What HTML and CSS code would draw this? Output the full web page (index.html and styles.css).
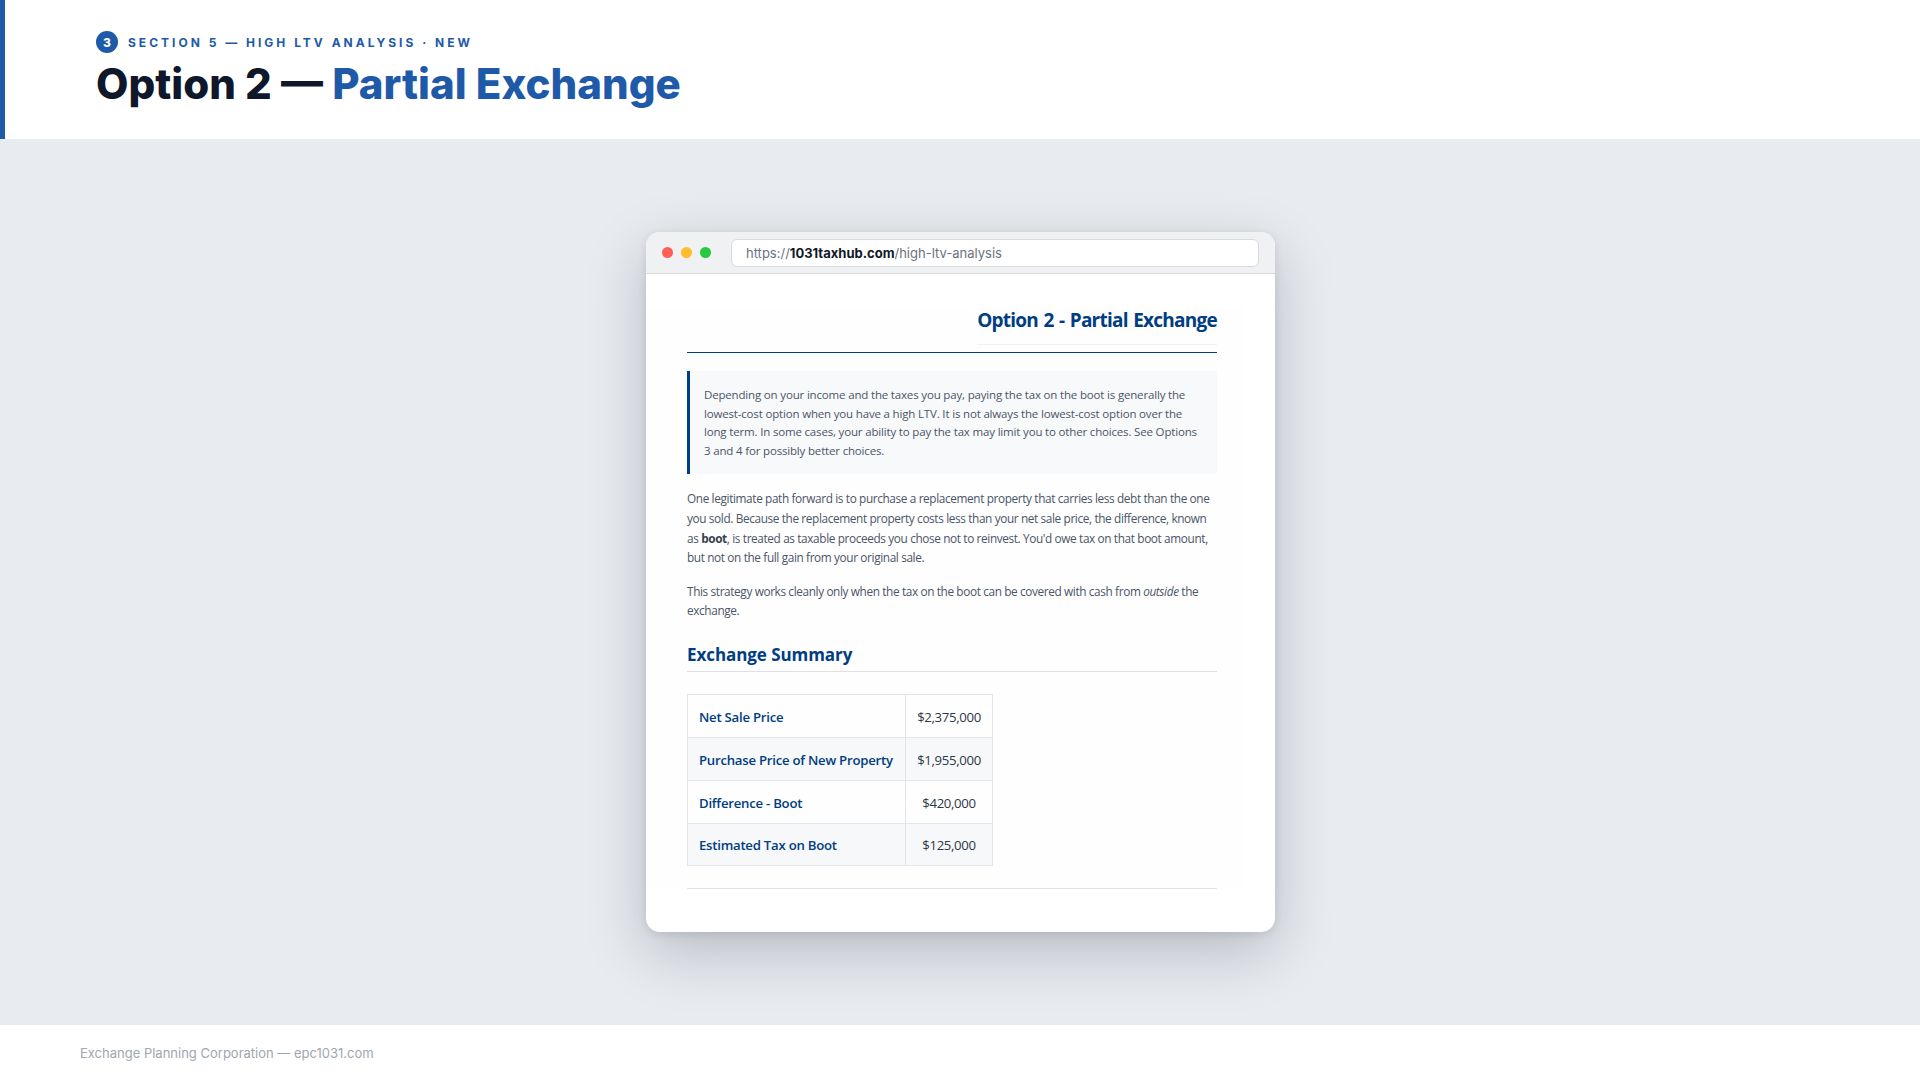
FILE: index.html
```html
<!DOCTYPE html>
<html lang="en">
<head>
<meta charset="utf-8">
<title>Option 2 — Partial Exchange</title>
<link rel="stylesheet" href="styles.css">
</head>
<body>
<div class="slide">
  <header class="top">
    <div class="eyebrow"><span class="badge">3</span><span class="eyebrow-text">SECTION 5 — HIGH LTV ANALYSIS · NEW</span></div>
    <h1 class="title">Option 2 — <span class="accent">Partial Exchange</span></h1>
  </header>
  <main class="stage">
    <div class="window">
      <div class="chrome">
        <div class="dots"><span class="dot red"></span><span class="dot amber"></span><span class="dot green"></span></div>
        <div class="url">https://<b>1031taxhub.com</b>/high-ltv-analysis</div>
      </div>
      <div class="viewport">
        <article class="article">
          <div class="page-head"><h2 class="page-title">Option 2 - Partial Exchange</h2></div>
          <div class="callout">Depending on your income and the taxes you pay, paying the tax on the boot is generally the lowest-cost option when you have a high LTV. It is not always the lowest-cost option over the long term. In some cases, your ability to pay the tax may limit you to other choices. See Options 3 and 4 for possibly better choices.</div>
          <p class="para">One legitimate path forward is to purchase a replacement property that carries less debt than the one you sold. Because the replacement property costs less than your net sale price, the difference, known as <strong>boot</strong>, is treated as taxable proceeds you chose not to reinvest. You'd owe tax on that boot amount, but not on the full gain from your original sale.</p>
          <p class="para para-next">This strategy works cleanly only when the tax on the boot can be covered with cash from <em>outside</em> the exchange.</p>
          <h3 class="section">Exchange Summary</h3>
          <table class="summary">
            <tr><th>Net Sale Price</th><td>$2,375,000</td></tr>
            <tr><th>Purchase Price of New Property</th><td>$1,955,000</td></tr>
            <tr><th>Difference - Boot</th><td>$420,000</td></tr>
            <tr class="last"><th>Estimated Tax on Boot</th><td>$125,000</td></tr>
          </table>
          <hr class="rule">
        </article>
      </div>
    </div>
  </main>
  <footer class="foot">Exchange Planning Corporation — epc1031.com</footer>
</div>
</body>
</html>
```

FILE: styles.css
```css
* { box-sizing: border-box; }
html, body { margin: 0; padding: 0; }
body { font-family: "Inter", "Liberation Sans", sans-serif; background: #e8ebef; }
.slide { width: 1920px; height: 1080px; display: flex; flex-direction: column; overflow: hidden; }

.top { height: 139px; flex: none; background: #fff; border-left: 5px solid #1e5aa8; padding: 31px 0 0 91px; }
.eyebrow { display: flex; align-items: center; gap: 10px; height: 22px; }
.badge { width: 22px; height: 22px; border-radius: 50%; background: #1e5aa8; color: #fff; font-size: 12px; font-weight: 800; display: flex; align-items: center; justify-content: center; }
.eyebrow-text { font-size: 12px; font-weight: 700; letter-spacing: 3px; color: #1e5aa8; }
.title { margin: 5px 0 0; font-size: 42px; line-height: 52px; font-weight: 800; color: #0f172a; }
.accent { color: #1e5aa8; }

.stage { flex: 1; display: flex; align-items: center; justify-content: center; padding-left: 1px; }
.window { width: 629px; height: 700px; background: #fff; border-radius: 14px; overflow: hidden; box-shadow: 0 20px 60px rgba(15, 23, 42, 0.22), 0 2px 8px rgba(15, 23, 42, 0.1); }
.chrome { height: 42px; background: #f0f1f3; border-bottom: 1px solid #d8dade; display: flex; align-items: center; padding: 0 16px; gap: 20px; }
.dots { display: flex; gap: 8px; }
.dot { width: 11px; height: 11px; border-radius: 50%; }
.red { background: #ff5f57; }
.amber { background: #febc2e; }
.green { background: #28c840; }
.url { flex: 1; height: 28px; background: #fff; border: 1px solid #d8dade; border-radius: 6px; padding: 0 14px; font-size: 13px; line-height: 27px; color: #6b7280; }
.url b { color: #111827; font-weight: 700; }

.viewport { padding: 33px 32px 0 0; }
.article { background: #fefefe; padding: 0 26px 0 41px; color: #4a5568; font-family: "Open Sans", "Noto Sans", sans-serif; }
.page-head { border-bottom: 1.5px solid #003d82; padding-bottom: 7px; text-align: right; }
.page-title { display: inline-block; margin: 0; font-size: 19px; line-height: 27px; font-weight: 700; color: #003d82; padding-bottom: 10px; border-bottom: 1px solid #f0f1f3; letter-spacing: -0.75px; word-spacing: 1.2px; vertical-align: bottom; }
.callout { margin-top: 18px; background: #f8f9fb; border-left: 3px solid #003d82; padding: 15px 14px 14px; font-size: 11.5px; line-height: 18.6px; letter-spacing: -0.17px; }
.para { margin: 15px 0 0; font-size: 11.8px; line-height: 19.6px; letter-spacing: -0.37px; }
.para-next { margin-top: 14px; }
.para strong { font-weight: 700; color: #374151; }
.section { margin: 22px 0 0; padding-bottom: 4px; border-bottom: 1px solid #dfe1e6; font-size: 17px; line-height: 24px; font-weight: 700; letter-spacing: -0.07px; color: #003d82; }
.summary { margin-top: 22px; border-collapse: collapse; font-size: 13.2px; }
.summary tr { height: 43px; }
.summary tr.last { height: 42px; }
.summary tr:nth-child(even) { background: #f7f8fa; }
.summary th, .summary td { border: 1px solid #e2e5ec; padding: 2px 11px 0; letter-spacing: -0.25px; }
.summary th { text-align: left; font-weight: 600; color: #003d82; width: 218px; }
.summary td { text-align: center; color: #2d3748; width: 87px; padding: 2px 4px 0; letter-spacing: -0.35px; }
.rule { margin: 22px 0 0; border: 0; border-top: 1px solid #dfe1e6; }

.foot { height: 55px; flex: none; background: #fff; padding-left: 80px; font-size: 13px; line-height: 56px; color: #a0a6b2; }
```
